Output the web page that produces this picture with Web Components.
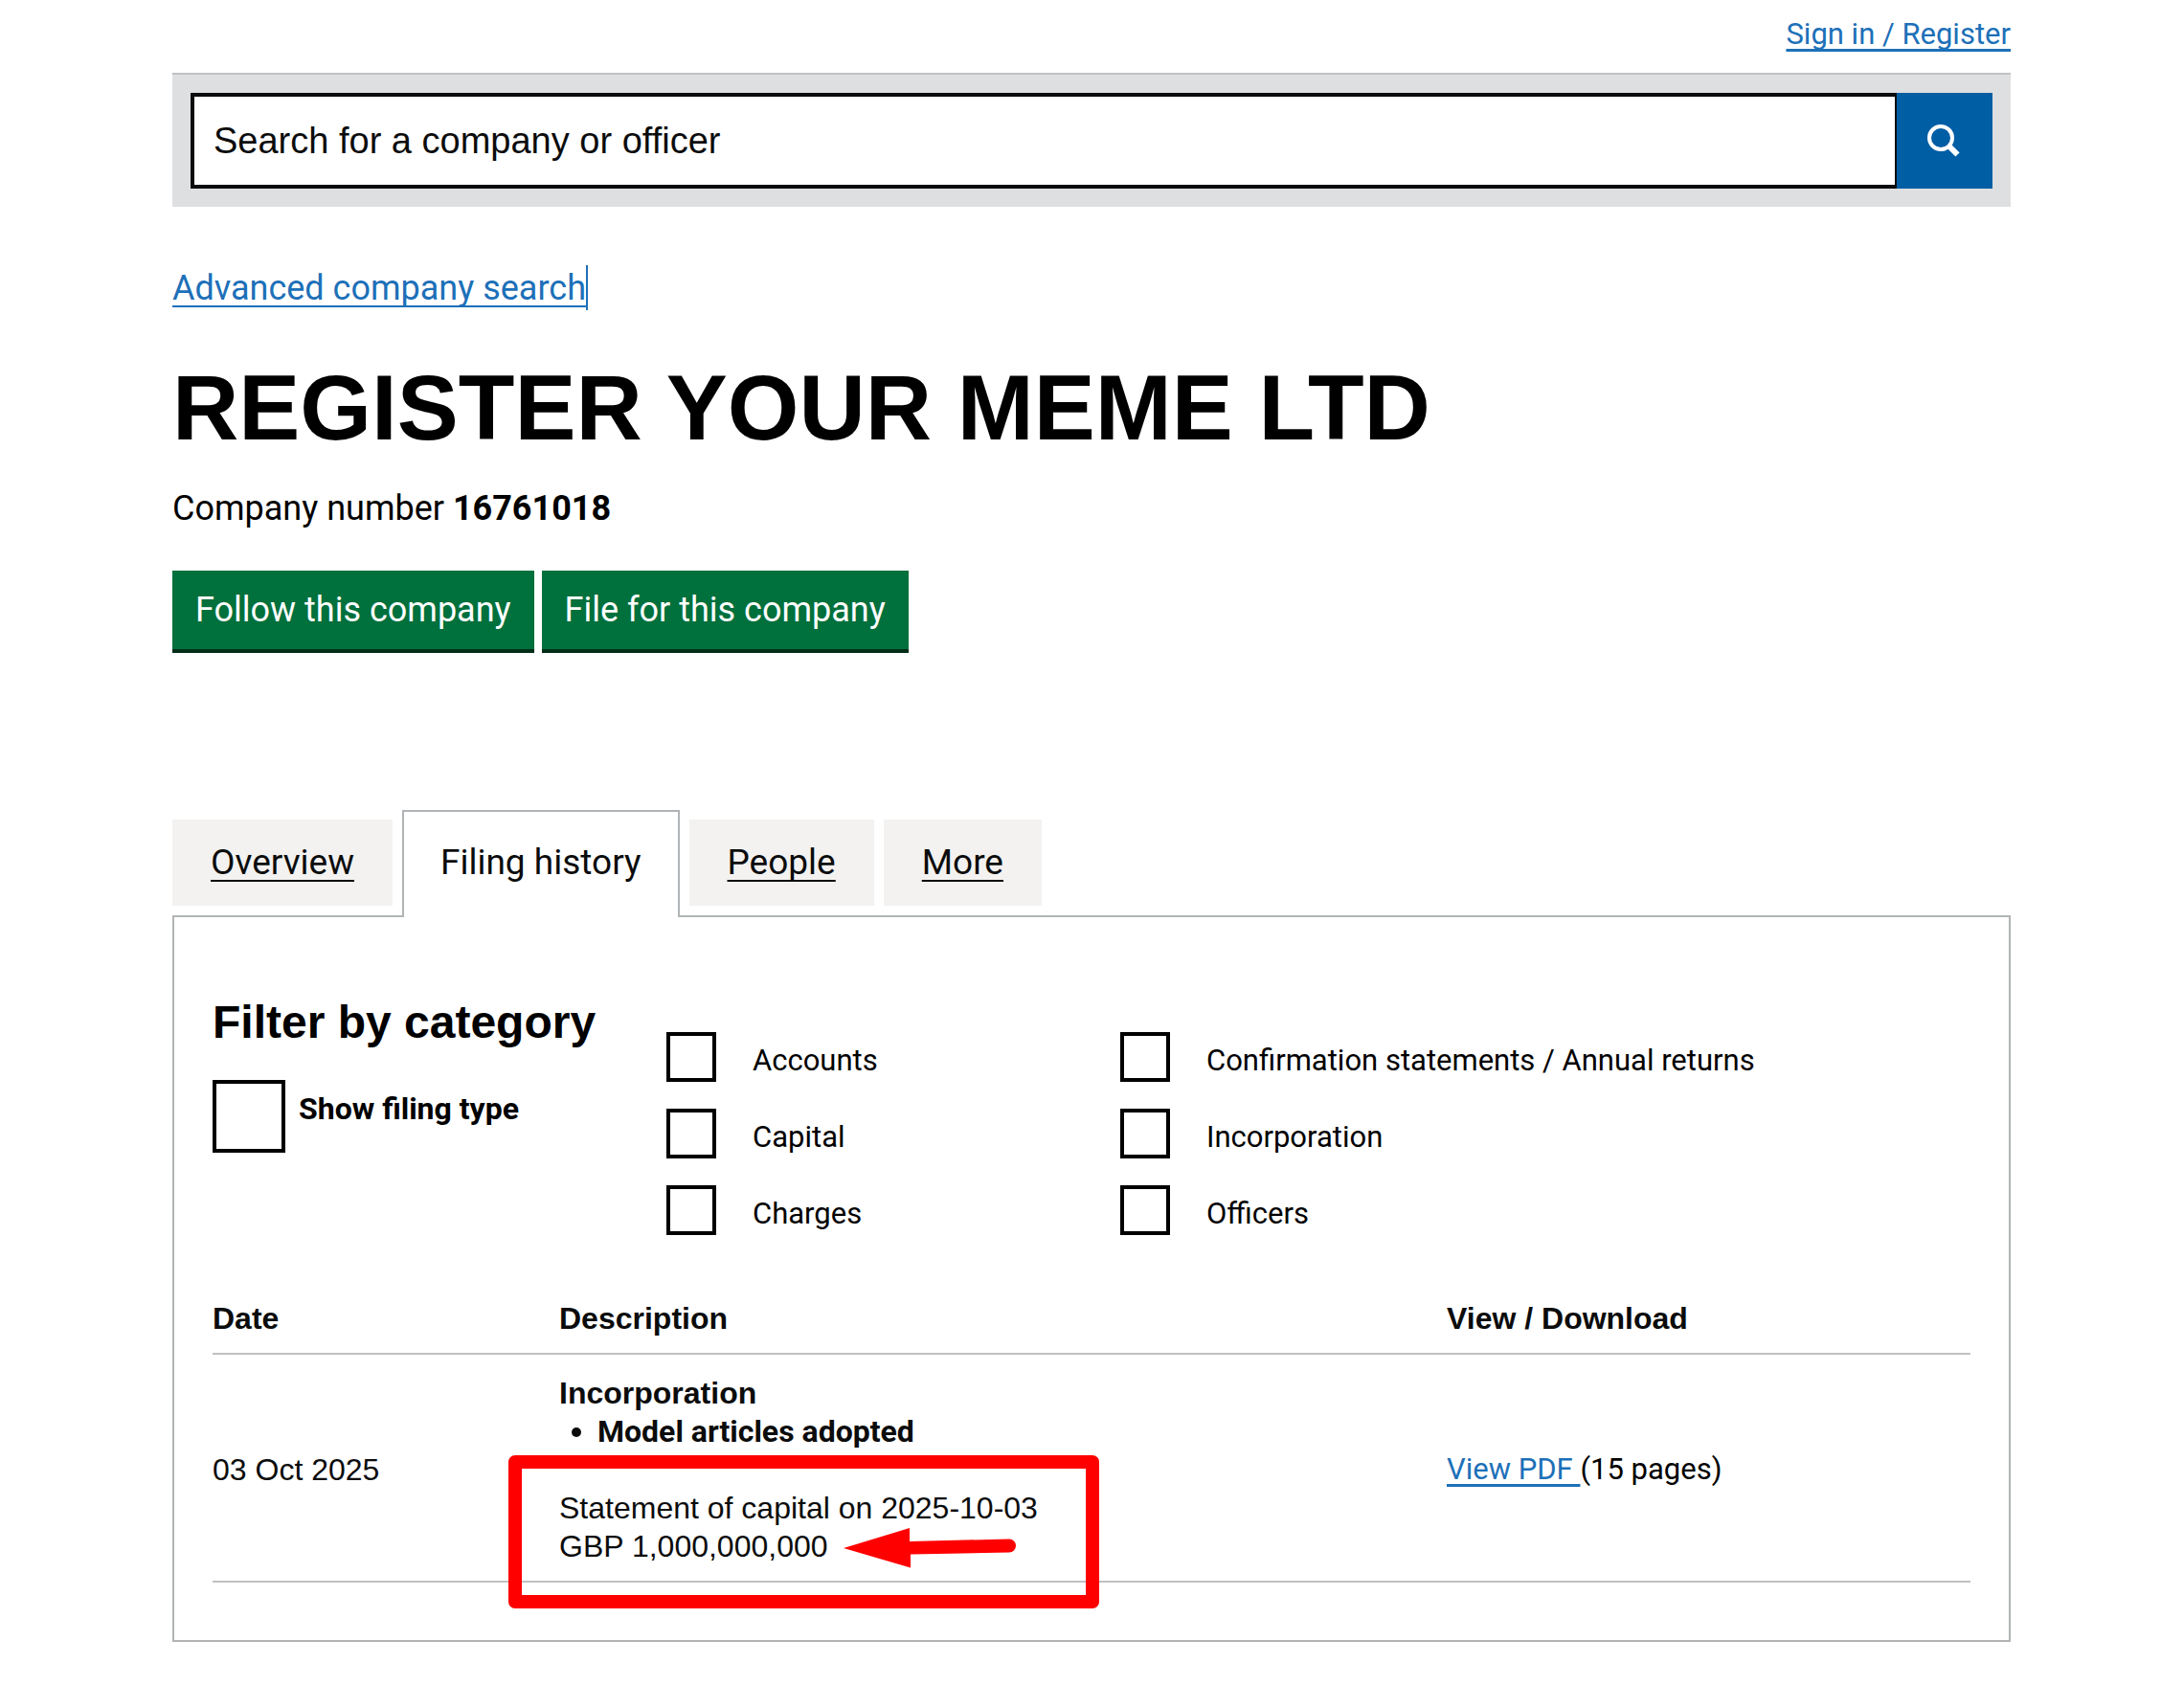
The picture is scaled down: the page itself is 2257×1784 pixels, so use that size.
<!DOCTYPE html>
<html lang="en">
<head>
<meta charset="utf-8">
<meta name="viewport" content="width=device-width, initial-scale=1">
<title>REGISTER YOUR MEME LTD filing history</title>
<style>
    :root{
        --text: #0b0c0c;
        --link: #1d70b8;
        --line: #b1b4b6;
        --rule: #bfc1c3;
        --transport: Roboto, "Noto Sans", sans-serif;
        --arial: "Liberation Sans", Arial, sans-serif;
    }
    body{
        margin: 0;
        background: white;
        color: black;
        font: 36px/50px var(--transport);
    }
</style>
</head>
<body>
<company-page>
    <account-link slot="account" href="#sign-in">Sign in / Register</account-link>
    <site-search slot="search" placeholder="Search for a company or officer"></site-search>
    <company-header name="REGISTER YOUR MEME LTD" number="16761018">
        <action-button>Follow this company</action-button>
        <action-button>File for this company</action-button>
    </company-header>
    <tab-bar>
        <tab-item href="#overview">Overview</tab-item>
        <tab-item href="#filing-history" selected>Filing history</tab-item>
        <tab-item href="#people">People</tab-item>
        <tab-item href="#more">More</tab-item>
    </tab-bar>
    <tab-panel>
        <category-filter>
            <check-box slot="type" large>Show filing type</check-box>
            <check-box slot="first">Accounts</check-box>
            <check-box slot="first">Capital</check-box>
            <check-box slot="first">Charges</check-box>
            <check-box slot="second">Confirmation statements / Annual returns</check-box>
            <check-box slot="second">Incorporation</check-box>
            <check-box slot="second">Officers</check-box>
        </category-filter>
        <filing-table></filing-table>
    </tab-panel>
</company-page>

<script>
class BaseElement extends HTMLElement{
    constructor(){
        super();
        this._root = this.attachShadow({mode: 'open'});
    }
    connectedCallback(){
        this._root.innerHTML = this._template();
    }
}

class CompanyPage extends BaseElement{
    _template(){
        return `
            <style>
                :host{
                    display: block;
                    padding: 16px 157px 60px 180px;
                }
                header{
                    display: flex;
                    flex-direction: column;
                    gap: 20px;
                }
                .advanced{
                    margin: 60px 0 0;
                }
                .advanced a{
                    padding: 3px 0 2px;
                    color: var(--link);
                    border-right: 2px solid var(--link);
                    text-decoration: underline 2px;
                    text-underline-offset: 6px;
                    text-decoration-skip-ink: none;
                }
            </style>
            <header>
                <slot name="account"></slot>
                <slot name="search"></slot>
            </header>
            <p class="advanced"><a href="#advanced-search">Advanced company search</a></p>
            <main><slot></slot></main>
        `;
    }
}

class AccountLink extends BaseElement{
    _template(){
        return `
            <style>
                :host{
                    display: flex;
                    justify-content: flex-end;
                    font-size: 31px;
                    line-height: 40px;
                }
                a{
                    color: var(--link);
                    text-decoration: underline 3px;
                    text-underline-offset: 5px;
                    text-decoration-skip-ink: none;
                }
            </style>
            <a href="${this.getAttribute('href')}"><slot></slot></a>
        `;
    }
}

class SiteSearch extends BaseElement{
    _template(){
        let placeholder = this.getAttribute('placeholder');
        return `
            <style>
                :host{
                    display: block;
                    padding: 19px;
                    background: #dedfe1;
                    border-top: 2px solid var(--rule);
                }
                form{
                    display: flex;
                }
                input{
                    flex: 1;
                    min-width: 0;
                    height: 100px;
                    box-sizing: border-box;
                    padding: 0 20px;
                    border: 4px solid var(--text);
                    border-right-width: 2px;
                    border-radius: 0;
                    background: white;
                    color: var(--text);
                    font: 38px var(--arial);
                }
                input::placeholder{
                    color: var(--text);
                    opacity: 1;
                }
                button{
                    display: flex;
                    align-items: center;
                    justify-content: center;
                    width: 100px;
                    padding: 0;
                    border: 0;
                    background: #005ea5;
                    cursor: pointer;
                }
            </style>
            <form role="search">
                <input type="search" aria-label="${placeholder}" placeholder="${placeholder}">
                <button type="button" aria-label="Search">
                    <svg width="38" height="34" viewBox="0 0 38 34" fill="none" stroke="white" stroke-width="4">
                        <circle cx="15" cy="14" r="12"/>
                        <path d="M23.500 22.500L32.500 31.500" stroke-width="6"/>
                    </svg>
                </button>
            </form>
        `;
    }
}

class CompanyHeader extends BaseElement{
    _template(){
        return `
            <style>
                :host{
                    display: block;
                }
                h1{
                    margin: 50px 0 30px;
                    font: bold 96px/100px var(--arial);
                }
                p{
                    margin: 0 0 40px;
                }
                .actions{
                    display: flex;
                    flex-wrap: wrap;
                    gap: 8px;
                }
            </style>
            <h1>${this.getAttribute('name')}</h1>
            <p>Company number <strong>${this.getAttribute('number')}</strong></p>
            <div class="actions"><slot></slot></div>
        `;
    }
}

class ActionButton extends BaseElement{
    _template(){
        return `
            <style>
                :host{
                    display: block;
                }
                button{
                    padding: 16px 24px;
                    border: 0;
                    border-bottom: 4px solid #002d18;
                    background: #00703c;
                    color: white;
                    font: inherit;
                    cursor: pointer;
                }
            </style>
            <button type="button"><slot></slot></button>
        `;
    }
}

class TabBar extends BaseElement{
    _template(){
        return `
            <style>
                :host{
                    display: block;
                    margin-top: 164px;
                    font-size: 37px;
                }
                nav{
                    display: flex;
                    gap: 10px;
                    align-items: flex-start;
                }
            </style>
            <nav aria-label="Company information"><slot></slot></nav>
        `;
    }
}

class TabItem extends BaseElement{
    _template(){
        let current = this.hasAttribute('selected') ? 'aria-current="page"' : '';
        return `
            <style>
                :host{
                    display: block;
                    margin-top: 10px;
                    padding: 20px 40px;
                    background: #f3f2f1;
                }
                :host([selected]){
                    margin: 0 0 -2px;
                    padding: 28px 38px 32px;
                    border: 2px solid var(--line);
                    border-bottom: 0;
                    background: white;
                    position: relative;
                }
                a{
                    color: var(--text);
                    text-decoration: underline 2px;
                    text-underline-offset: 6px;
                    text-decoration-skip-ink: none;
                }
                :host([selected]) a{
                    text-decoration: none;
                }
            </style>
            <a href="${this.getAttribute('href')}" ${current}><slot></slot></a>
        `;
    }
}

class TabPanel extends BaseElement{
    _template(){
        return `
            <style>
                :host{
                    display: block;
                    padding: 80px 40px 60px;
                    border: 2px solid var(--line);
                }
            </style>
            <slot></slot>
        `;
    }
}

class CategoryFilter extends BaseElement{
    _template(){
        return `
            <style>
                :host{
                    display: grid;
                    grid-template-columns: repeat(4, minmax(0, 1fr));
                    column-gap: 60px;
                }
                h2{
                    margin: 0 0 30px;
                    font: bold 48px/60px var(--arial);
                    white-space: nowrap;
                }
                .group{
                    display: flex;
                    flex-direction: column;
                    gap: 28px;
                    margin-top: 40px;
                }
                .wide{
                    grid-column: span 2;
                }
            </style>
            <div>
                <h2>Filter by category</h2>
                <slot name="type"></slot>
            </div>
            <div class="group"><slot name="first"></slot></div>
            <div class="group wide"><slot name="second"></slot></div>
        `;
    }
}

class CheckBox extends BaseElement{
    _template(){
        return `
            <style>
                :host{
                    display: block;
                    font-size: 31px;
                    line-height: 40px;
                }
                :host([large]){
                    font-size: 32px;
                    font-weight: bold;
                }
                label{
                    display: flex;
                    gap: 38px;
                }
                :host([large]) label{
                    gap: 14px;
                }
                input{
                    appearance: none;
                    flex: none;
                    width: 52px;
                    height: 52px;
                    margin: 0;
                    border: 4px solid black;
                    background: white;
                }
                input:checked{
                    box-shadow: inset 0 0 0 8px white;
                    background: black;
                }
                :host([large]) input{
                    width: 76px;
                    height: 76px;
                }
                span{
                    padding-top: 10px;
                }
            </style>
            <label><input type="checkbox"><span><slot></slot></span></label>
        `;
    }
}

class FilingTable extends BaseElement{
    _template(){
        return `
            <style>
                :host{
                    display: block;
                    margin-top: 47px;
                    color: var(--text);
                    font: 32px/40px var(--arial);
                }
                table{
                    width: 100%;
                    table-layout: fixed;
                    border-spacing: 0;
                    text-align: left;
                }
                .date{
                    width: 362px;
                }
                .view{
                    width: 547px;
                }
                th, td{
                    padding: 20px 0 16px;
                    border-bottom: 2px solid var(--rule);
                    vertical-align: middle;
                }
                ul{
                    margin: 0 0 40px;
                    padding-left: 40px;
                    font-family: var(--transport);
                    font-weight: bold;
                }
                .pdf{
                    color: black;
                    font-family: var(--transport);
                    font-size: 31px;
                }
                a{
                    color: var(--link);
                    text-decoration: underline 3px;
                    text-underline-offset: 5px;
                    text-decoration-skip-ink: none;
                }
            </style>
            <table>
                <thead>
                    <tr>
                        <th class="date" scope="col">Date</th>
                        <th scope="col">Description</th>
                        <th class="view" scope="col">View / Download</th>
                    </tr>
                </thead>
                <tbody>
                    <tr>
                        <td>03 Oct 2025</td>
                        <td>
                            <strong>Incorporation</strong>
                            <ul><li>Model articles adopted</li></ul>
                            <marked-note>Statement of capital on 2025-10-03<br>GBP 1,000,000,000</marked-note>
                        </td>
                        <td class="pdf"><a href="#pdf">View PDF </a>(15 pages)</td>
                    </tr>
                </tbody>
            </table>
        `;
    }
}

// Red frame and arrow laid over the slotted text
class MarkedNote extends BaseElement{
    _template(){
        return `
            <style>
                :host{
                    display: block;
                    position: relative;
                }
                svg{
                    position: absolute;
                    left: -53px;
                    top: -35px;
                    pointer-events: none;
                }
            </style>
            <slot></slot>
            <svg width="617" height="160" viewBox="0 0 617 160" aria-hidden="true">
                <rect x="7" y="7" width="603" height="146" fill="none" stroke="red" stroke-width="14" stroke-linejoin="round"/>
                <path d="M350 97L419 76V90L523 87.500A7 7 0 0 1 523 101.500L420 103.500V117.500Z" fill="red"/>
            </svg>
        `;
    }
}

window.customElements.define('company-page', CompanyPage);
window.customElements.define('account-link', AccountLink);
window.customElements.define('site-search', SiteSearch);
window.customElements.define('company-header', CompanyHeader);
window.customElements.define('action-button', ActionButton);
window.customElements.define('tab-bar', TabBar);
window.customElements.define('tab-item', TabItem);
window.customElements.define('tab-panel', TabPanel);
window.customElements.define('category-filter', CategoryFilter);
window.customElements.define('check-box', CheckBox);
window.customElements.define('filing-table', FilingTable);
window.customElements.define('marked-note', MarkedNote);
</script>
</body>
</html>
